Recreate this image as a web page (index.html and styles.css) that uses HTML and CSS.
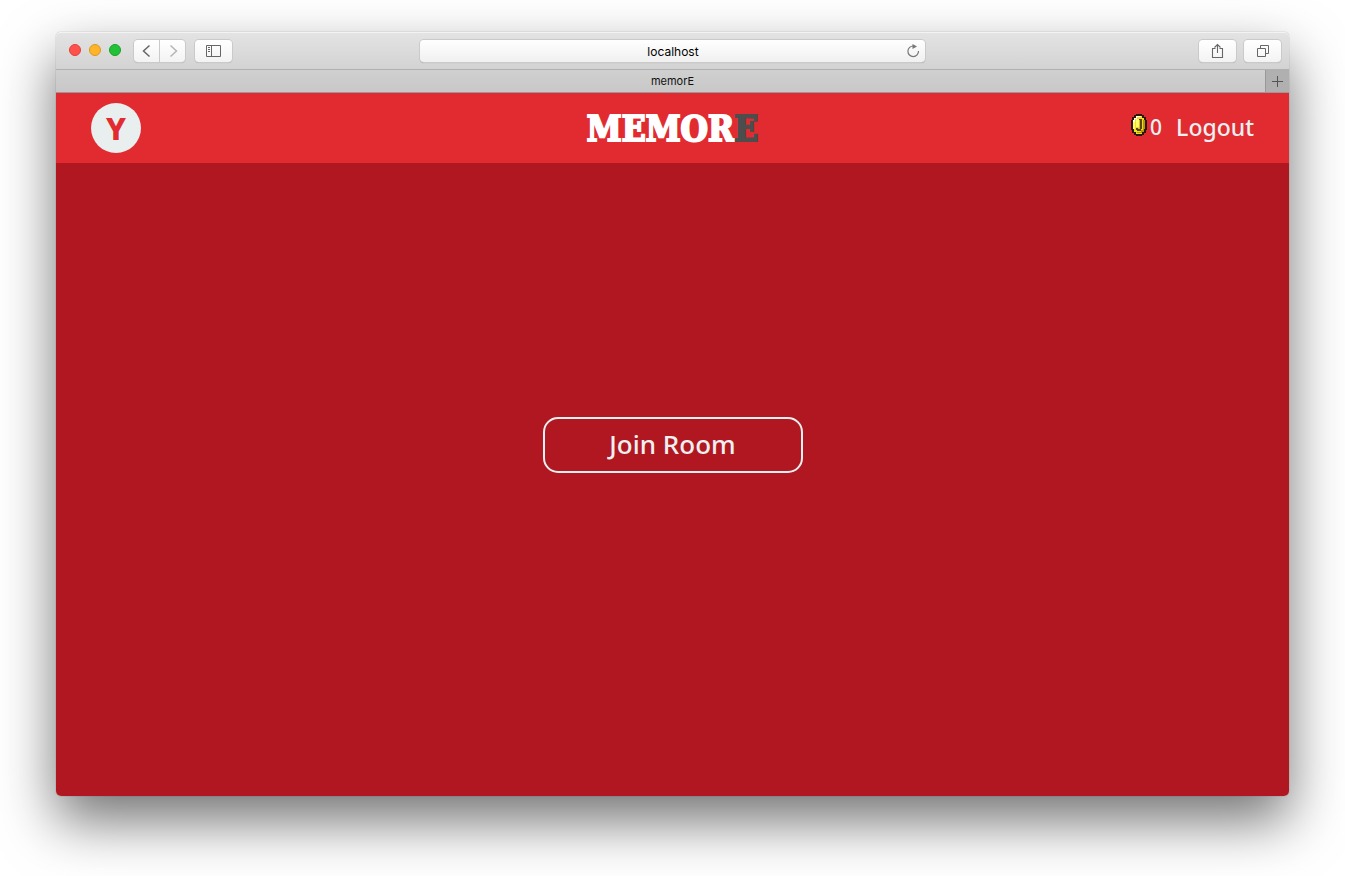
FILE: index.html
```html
<!DOCTYPE html>
<html lang="en">
<head>
<meta charset="utf-8">
<title>memorE</title>
<link rel="stylesheet" href="styles.css">
</head>
<body>
<div class="window">
  <div class="toolbar">
    <div class="tools">
      <div class="lights">
        <button class="light close" aria-label="Close"></button>
        <button class="light minimize" aria-label="Minimize"></button>
        <button class="light maximize" aria-label="Full screen"></button>
      </div>
      <div class="history">
        <button class="tool back" aria-label="Back"><svg width="24" height="22" viewBox="0 0 24 22"><path d="M14.500 5.500 8.500 11l6 5.500" stroke="#666" stroke-width="1.500"/></svg></button>
        <button class="tool forward" aria-label="Forward" disabled><svg width="24" height="22" viewBox="0 0 24 22"><path d="M9.500 5.500 15.500 11l-6 5.500" stroke="#b5b5b5" stroke-width="1.500"/></svg></button>
      </div>
      <button class="tool wide" aria-label="Show sidebar"><svg width="15" height="12" viewBox="0 0 15 12"><path d="M.5.5h14v11H.5zM5.500.5v11M2 2.500h2M2 4.500h2M2 6.500h2" stroke="#666"/></svg></button>
    </div>
    <div class="address">
      <input class="url" type="text" value="localhost" aria-label="Address">
      <button class="reload" aria-label="Reload"><svg width="14" height="14" viewBox="0 0 14 14"><path d="M7.500 2A5.300 5.300 0 1 0 12.500 7" stroke="#777" stroke-width="1.200"/><path d="M6.500 0 11 2.500 6.500 5z" fill="#777"/></svg></button>
    </div>
    <div class="tools end">
      <button class="tool wide" aria-label="Share"><svg width="13" height="16" viewBox="0 0 13 16"><path d="M4.500 5.500h-3v9h10v-9h-3M6.500 10V1.500M3.500 4.500l3-3 3 3" stroke="#666" stroke-width="1.100"/></svg></button>
      <button class="tool wide" aria-label="Show all tabs"><svg width="14" height="14" viewBox="0 0 14 14"><path d="M1.500 4.500h8v8h-8zM4.500 4.500v-3h8v8h-3" stroke="#666"/></svg></button>
    </div>
  </div>
  <div class="tabs">
    <div class="tab">memorE</div>
    <button class="new-tab" aria-label="New tab"><svg width="11" height="11" viewBox="0 0 11 11"><path d="M5.500 0v11M0 5.500h11" stroke="#555"/></svg></button>
  </div>
  <header class="header">
    <div class="side"><div class="avatar">Y</div></div>
    <h1 class="logo">MEMOR<span class="logo-end">E</span></h1>
    <div class="side account">
      <span class="coins"><svg class="coin" width="16" height="22" viewBox="0 0 16 22"><path d="M5 0h6v1h2v2h2v3h1v10h-1v3h-2v2h-2v1H5v-1H3v-2H1v-3H0V6h1V3h2V1h2z" fill="#28180e"/><path d="M5 2h6v2h2v3h1v8h-1v3h-2v2H5v-2H3v-3H2V7h1V4h2z" fill="#f0dc19"/><path d="M5 2h5v1H6v2H4v3H2V6h1V4h2z" fill="#fff"/><path d="M2 8h2v7H2zM5 5h3v8H5z" fill="#fff86c"/><path d="M12 6h2v9h-1v3h-2v1H6v-1h4v-2h2z" fill="#b6950c"/><path d="M8 5h3v10h-1v2H6v-1H5v-2h3z" fill="#594417"/><path d="M8 6h1v9H7v-1h1z" fill="#d4bd18"/></svg>0</span>
      <a class="logout" href="#">Logout</a>
    </div>
  </header>
  <main class="room">
    <button class="join">Join Room</button>
  </main>
</div>
</body>
</html>
```
FILE: styles.css
```css
* { box-sizing: border-box; }

body {
  margin: 0;
  min-height: 100vh;
  padding: 32px 56px 80px;
  display: flex;
  background: #fff;
  overflow: hidden;
  font-family: "Noto Sans", "Open Sans", sans-serif;
}

button, input { font: inherit; margin: 0; padding: 0; border: 0; }
svg { display: block; fill: none; }

.window {
  flex: 1;
  display: flex;
  flex-direction: column;
  border-radius: 5px;
  box-shadow: 0 0 1px rgba(0, 0, 0, .5), 0 25px 55px rgba(0, 0, 0, .55);
}

.toolbar {
  display: grid;
  grid-template-columns: 1fr 41% 1fr;
  align-items: center;
  height: 38px;
  border-top: 1px solid #f3f3f3;
  border-bottom: 1px solid #b0b0b0;
  border-radius: 5px 5px 0 0;
  background: linear-gradient(#e3e3e3, #d3d3d3);
}

.tools { display: flex; align-items: center; padding: 0 8px 0 13px; }
.end { justify-content: flex-end; gap: 8px; }
.lights { display: flex; gap: 8px; margin-right: 13px; padding-bottom: 2px; }
.light { width: 12px; height: 12px; border-radius: 50%; border: 1px solid; }
.close { background: #ff524d; border-color: #e33e39; }
.minimize { background: #ffb429; border-color: #dc981c; }
.maximize { background: #23c137; border-color: #14a426; }

.history { display: flex; gap: 1px; margin-right: 10px; }
.tool {
  display: flex;
  align-items: center;
  justify-content: center;
  width: 25px;
  height: 22px;
  border-radius: 4px;
  background: linear-gradient(#fff, #f3f3f3);
  box-shadow: 0 0 0 1px #cacaca, 0 1px 1px #aaa;
}
.back { border-radius: 4px 0 0 4px; }
.forward { border-radius: 0 4px 4px 0; }
.wide { width: 37px; }

.address {
  display: flex;
  align-items: center;
  height: 22px;
  border-radius: 4px;
  background: linear-gradient(#fff, #f0f0f0);
  box-shadow: 0 0 0 1px #cacaca, 0 1px 1px #999;
}
.url {
  flex: 1;
  min-width: 0;
  padding-left: 20px;
  background: none;
  color: #000;
  font: 12px Inter, sans-serif;
  text-align: center;
}
.reload { width: 19px; background: none; }

.tabs {
  display: flex;
  height: 23px;
  border-bottom: 1px solid #999;
  background: linear-gradient(#d0d0d0, #c8c8c8);
}
.tab {
  flex: 1;
  padding-left: 24px;
  color: #111;
  font: 11px/22px Inter, sans-serif;
  text-align: center;
}
.new-tab {
  display: flex;
  align-items: center;
  justify-content: center;
  width: 24px;
  border-left: 1px solid #999;
  background: #b0b0b0;
}

.header {
  display: grid;
  grid-template-columns: 1fr auto 1fr;
  align-items: center;
  height: 70px;
  padding: 0 35px;
  background: #e12b30;
}
.avatar {
  width: 50px;
  height: 50px;
  border-radius: 50%;
  background: #e9eeee;
  color: #e12b30;
  font-size: 31px;
  font-weight: 800;
  line-height: 50px;
  text-align: center;
}
.logo {
  margin: 0;
  color: #fff;
  font: 700 35px "DejaVu Serif Condensed", "DejaVu Serif", serif;
  -webkit-text-stroke: 2px;
}
.logo-end { color: #4d4d4d; }
.account {
  display: flex;
  align-items: center;
  justify-content: flex-end;
  gap: 14px;
  padding-bottom: 3px;
  color: #ecf0f1;
  font-weight: 500;
  line-height: 32px;
}
.coins { display: flex; align-items: center; gap: 3px; font-size: 21px; }
.coin { margin-bottom: 3px; }
.logout { color: inherit; font-size: 23px; text-decoration: none; }

.room {
  flex: 1;
  display: flex;
  align-items: center;
  justify-content: center;
  padding-bottom: 70px;
  border-radius: 0 0 5px 5px;
  background: #b11720;
}
.join {
  width: 260px;
  height: 56px;
  padding-bottom: 2px;
  border: 2px solid #ecf0f1;
  border-radius: 15px;
  background: none;
  color: #ecf0f1;
  font-size: 26px;
  font-weight: 500;
}
```
